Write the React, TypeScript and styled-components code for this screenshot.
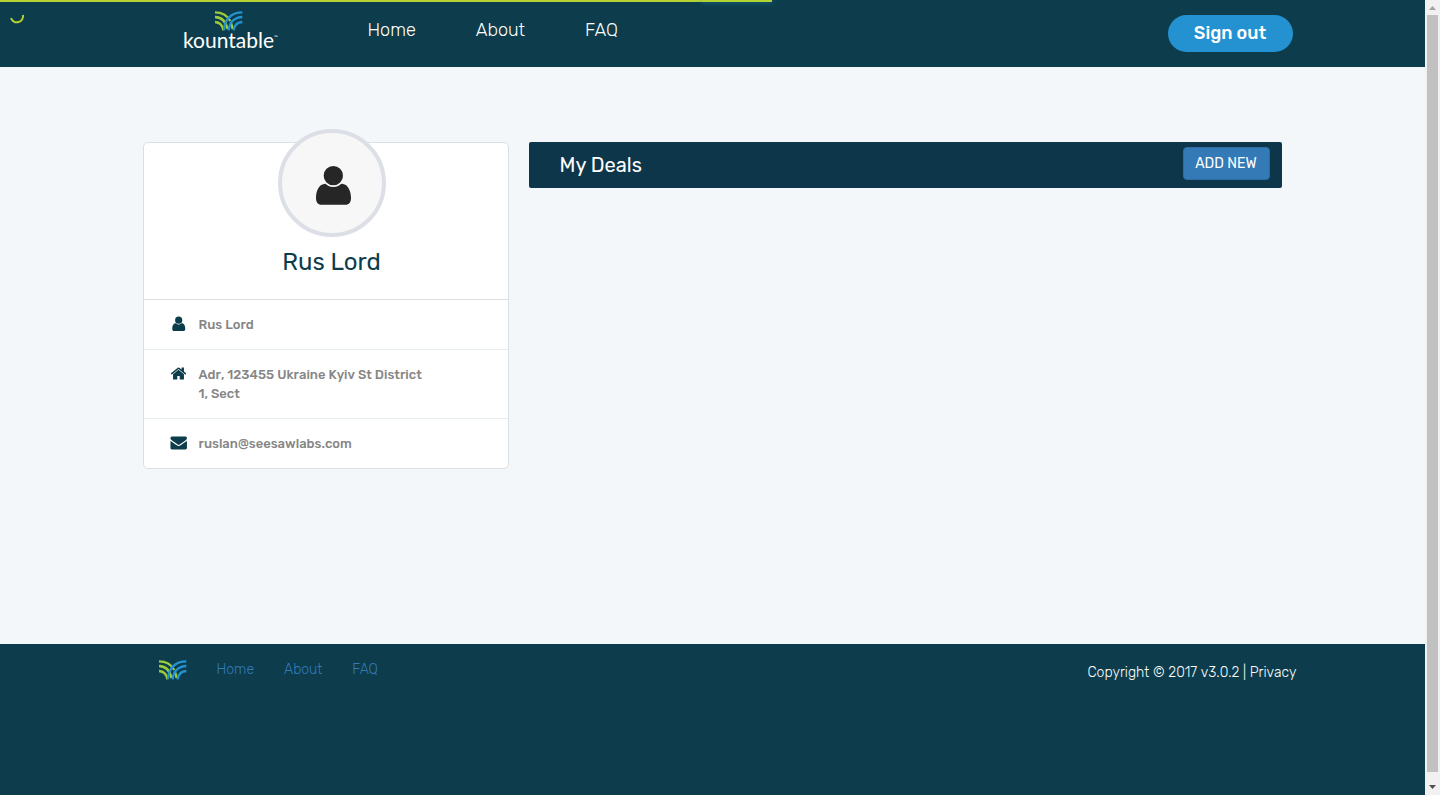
import React from "react";
import styled, { createGlobalStyle } from "styled-components";

const GlobalStyle = createGlobalStyle`
  *, *::before, *::after { box-sizing: border-box; }
  body {
    margin: 0;
    background: #f3f7fa;
    color: #0d3d4c;
    font-family: Rubik, Roboto, sans-serif;
    font-size: 14px;
    line-height: 20px;
  }
`;

const Page = styled.div`
  display: flex;
  flex-direction: column;
  min-height: 100vh;
  padding-right: 15px;
`;

const Header = styled.header`
  background: #0d3d4c;
`;

const Container = styled.div`
  width: 100%;
  max-width: 1170px;
  margin: 0 auto;
  padding: 0 15px;
`;

const HeaderRow = styled(Container)`
  display: flex;
  align-items: flex-start;
  height: 67px;
  padding: 0 5px 0 56px;
`;

const Brand = styled.a`
  display: flex;
  flex-direction: column;
  align-items: center;
  width: 90px;
  padding-top: 11px;
  color: #fff;
  text-decoration: none;
`;

const Wordmark = styled.span`
  position: relative;
  font-family: Lato, sans-serif;
  font-size: 21px;
  line-height: 18px;
`;

const Trademark = styled.small`
  position: absolute;
  top: 0;
  left: 100%;
  font-size: 5px;
  line-height: 12px;
`;

const HeaderNav = styled.nav`
  display: flex;
  flex: 1;
  gap: 60px;
  padding: 18px 0 0 94px;
`;

const HeaderLink = styled.a`
  color: #fff;
  font-size: 18px;
  font-weight: 300;
  line-height: 24px;
  text-decoration: none;
`;

const SignOut = styled.button`
  width: 125px;
  height: 37px;
  margin-top: 15px;
  padding: 0 0 2px;
  border: 0;
  border-radius: 19px;
  background: #2492d1;
  color: #fff;
  font: 500 18px/24px Rubik, Roboto, sans-serif;
`;

const Content = styled(Container)`
  display: grid;
  grid-template-columns: 366px 1fr;
  gap: 20px;
  align-items: start;
  flex: 1;
  padding: 75px 16px 175px 15px;
`;

const Card = styled.section`
  border: 1px solid #dadfe3;
  border-radius: 5px;
  background: #fff;
`;

const CardTop = styled.div`
  display: flex;
  flex-direction: column;
  align-items: center;
  height: 157px;
  padding-left: 12px;
  border-bottom: 1px solid #dadfe3;
`;

const Avatar = styled.div`
  display: flex;
  flex-shrink: 0;
  align-items: center;
  justify-content: center;
  width: 108px;
  height: 108px;
  margin-top: -14px;
  padding: 4px 0 0 3px;
  border: 4px solid #dcdfe5;
  border-radius: 50%;
  background: #f7f7f7;
`;

const UserName = styled.h1`
  margin: 10px 0 0;
  font-size: 24px;
  font-weight: 400;
  line-height: 30px;
`;

const Details = styled.ul`
  margin: 0;
  padding: 0;
  list-style: none;
`;

const Detail = styled.li`
  display: grid;
  grid-template-columns: 17px 232px;
  gap: 12px;
  padding: 15px 26px;
  color: #868686;
  font-size: 13px;
  font-weight: 500;
  font-kerning: none;
  line-height: 19px;

  & + & { border-top: 1px solid #e6edf1; }
`;

const DealsBar = styled.section`
  display: flex;
  align-items: center;
  justify-content: space-between;
  height: 46px;
  padding: 0 12px 4px 31px;
  border-radius: 2px;
  background: #0e364b;
`;

const DealsTitle = styled.h2`
  margin: 4px 0 0;
  color: #fff;
  font-size: 20px;
  font-weight: 400;
  line-height: 24px;
`;

const AddButton = styled.button`
  width: 87px;
  height: 33px;
  padding: 1px 0 0;
  border: 1px solid #2e6da4;
  border-radius: 4px;
  background: #337ab7;
  color: #fff;
  font: 400 14px/20px Rubik, Roboto, sans-serif;
`;

const Footer = styled.footer`
  min-height: 151px;
  background: #0d3d4c;
`;

const FooterRow = styled(Container)`
  display: flex;
  align-items: flex-start;
  padding: 16px 1px 0 31px;
`;

const FooterNav = styled.nav`
  display: flex;
  flex: 1;
  gap: 30px;
`;

const FooterLink = styled.a`
  color: #337ab7;
  font-weight: 300;
  text-decoration: none;
`;

const Copyright = styled.p`
  margin: 3px 0 0;
  color: #fff;
  font-weight: 300;
  font-kerning: none;

  a { color: inherit; text-decoration: none; }
`;

const Progress = styled.div`
  position: fixed;
  top: 0;
  left: 0;
  width: calc((100% - 15px) * 0.542);
  height: 2px;
  background: #b4d333;

  &::after {
    content: "";
    position: absolute;
    right: 0;
    width: 70px;
    height: 2px;
    box-shadow: 0 0 5px #1480b4;
    z-index: -1;
  }
`;

const ProgressLayer = styled.div`
  position: relative;
  z-index: 2;
`;

const Spinner = styled.svg`
  position: fixed;
  top: 8px;
  left: 8px;
`;

const Scrollbar = styled.div`
  position: fixed;
  top: 0;
  right: 0;
  bottom: 0;
  display: flex;
  flex-direction: column;
  align-items: center;
  width: 15px;
  background: #f1f1f1;
`;

const ScrollArrow = styled.svg`
  flex: 0 0 15px;
`;

const ScrollTrack = styled.div`
  flex: 1;
  width: 11px;
  padding-bottom: 8px;
`;

const ScrollThumb = styled.div`
  height: 100%;
  background: #c1c1c1;
`;

const Mark = () => (
  <svg width="28" height="20" viewBox="0 0 84 60" fill="none" strokeWidth="7" aria-hidden="true">
    <g stroke="#9ccb3b">
      <path d="M0 4C20 4 36 12 46 30" />
      <path d="M0 18C20 19 33 30 37 54" />
      <path d="M0 33C14 34 23 43 25 58" />
      <path d="M47 34C50 41 52 48 53 54" />
    </g>
    <g stroke="#2492d1">
      <path d="M82 4C50 4 28 24 27 58" />
      <path d="M82 18C58 19 43 34 41 58" />
      <path d="M82 33C67 34 58 43 56 58" />
    </g>
  </svg>
);

const personPath =
  "M55 3a29 29 0 1 1 0 58a29 29 0 1 1 0-58ZM28 57C31 56 33 57 35 59C46 68 64 68 75 59C78 57 81 56 84 57C98 58 108 78 108 98C108 112 102 119 92 119H19C9 119 3 112 3 98C3 78 12 58 28 57Z";

const icons = {
  user: { box: "-15 -10 137 137", path: personPath },
  home: { box: "0 0 1792 1792", path: "M1472 992v480q0 26-19 45t-45 19h-384v-384H768v384H384q-26 0-45-19t-19-45V992q0-1 .5-3t.5-3l575-474 575 474q1 2 1 6zm223-69l-62 74q-8 9-21 11h-3q-13 0-21-7L896 424 204 1001q-12 8-24 7-13-2-21-11l-62-74q-8-10-7-23.500t11-21.500l719-599q32-26 76-26t76 26l244 204V288q0-14 9-23t23-9h192q14 0 23 9t9 23v408l219 182q10 8 11 21.500t-7 23.500z" },
  mail: { box: "-50 -20 1850 1850", path: "M1792 710v794q0 66-47 113t-113 47H160q-66 0-113-47T0 1504V710q44 49 101 87 362 246 497 345 57 42 92.500 65.500t94.500 48 110 24.500h2q51 0 110-24.500t94.500-48 92.500-65.500q170-123 498-345 57-39 100-87zm0-294q0 79-49 151t-122 123q-376 261-468 325-10 7-42.500 31t-54 38.500-52 32.500-57.500 27-50 9h-2q-23 0-50-9t-57.500-27-52-32.500-54-38.500-42.500-31q-91-64-262-182.500T172 690q-62-42-117-115.500T0 438q0-78 41.500-130T160 256h1472q65 0 112.500 47t47.500 113z" },
};

const Icon = ({ name }: { name: keyof typeof icons }) => (
  <svg width="17" height="17" viewBox={icons[name].box} fill="#0d3d4c" aria-hidden="true">
    <path d={icons[name].path} />
  </svg>
);

const details: { icon: keyof typeof icons; text: string }[] = [
  { icon: "user", text: "Rus Lord" },
  { icon: "home", text: "Adr, 123455 Ukraine Kyiv St District 1, Sect" },
  { icon: "mail", text: "ruslan@seesawlabs.com" },
];

const links = ["Home", "About", "FAQ"];

export default function App() {
  return (
    <>
      <GlobalStyle />
      <Page>
        <Header>
          <HeaderRow>
            <Brand href="#">
              <Mark />
              <Wordmark>kountable<Trademark>™</Trademark></Wordmark>
            </Brand>
            <HeaderNav>
              {links.map((link) => <HeaderLink key={link} href="#">{link}</HeaderLink>)}
            </HeaderNav>
            <SignOut type="button">Sign out</SignOut>
          </HeaderRow>
        </Header>
        <Content as="main">
          <Card>
            <CardTop>
              <Avatar>
                <svg width="37" height="41" viewBox="0 0 111 123" fill="#262626" aria-hidden="true">
                  <path d={personPath} />
                  <path d="M34 56C46 66 64 66 76 56" fill="none" stroke="#f7f7f7" strokeWidth="2" />
                </svg>
              </Avatar>
              <UserName>Rus Lord</UserName>
            </CardTop>
            <Details>
              {details.map(({ icon, text }) => (
                <Detail key={icon}>
                  <Icon name={icon} />
                  <span>{text}</span>
                </Detail>
              ))}
            </Details>
          </Card>
          <DealsBar>
            <DealsTitle>My Deals</DealsTitle>
            <AddButton type="button">ADD NEW</AddButton>
          </DealsBar>
        </Content>
        <Footer>
          <FooterRow>
            <FooterNav>
              <Mark />
              {links.map((link) => <FooterLink key={link} href="#">{link}</FooterLink>)}
            </FooterNav>
            <Copyright>Copyright © 2017 v3.0.2 | <a href="#">Privacy</a></Copyright>
          </FooterRow>
        </Footer>
      </Page>
      <ProgressLayer>
        <Progress />
        <Spinner width="18" height="18" viewBox="0 0 18 18" fill="none" stroke="#b4d333" strokeWidth="2" aria-hidden="true">
          <path d="M3 10A6.200 6.200 0 0 0 15 7" />
        </Spinner>
      </ProgressLayer>
      <Scrollbar aria-hidden="true">
        <ScrollArrow width="15" height="15" viewBox="0 0 15 15" fill="#a3a3a3">
          <path d="M4 10L7.500 6L11 10Z" />
        </ScrollArrow>
        <ScrollTrack><ScrollThumb /></ScrollTrack>
        <ScrollArrow width="15" height="15" viewBox="0 0 15 15" fill="#505050">
          <path d="M4 5L7.500 9L11 5Z" />
        </ScrollArrow>
      </Scrollbar>
    </>
  );
}
